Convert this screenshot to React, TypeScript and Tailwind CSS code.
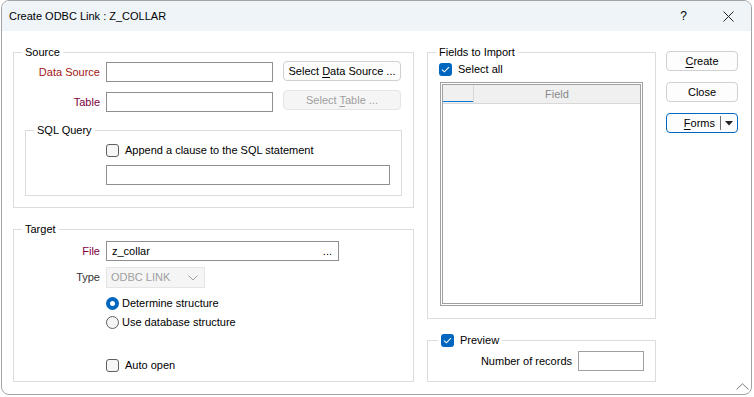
import React from "react";

const Check = ({ checked }: { checked?: boolean }) =>
  checked ? (
    <span className="w-[13px] h-[13px] rounded-[3px] bg-[#0067c0] flex items-center justify-center shrink-0">
      <svg width="9" height="7" viewBox="0 0 9 7">
        <path d="M1 3.6 L3.4 5.8 L8 1.2" stroke="white" strokeWidth="1.1" fill="none" />
      </svg>
    </span>
  ) : (
    <span className="w-[13px] h-[13px] rounded-[3px] border border-[#5f5f5f] bg-[#f7f7f7] shrink-0" />
  );

const Radio = ({ checked }: { checked?: boolean }) =>
  checked ? (
    <span className="w-[13px] h-[13px] rounded-full bg-[#0067c0] flex items-center justify-center shrink-0">
      <span className="w-[5px] h-[5px] rounded-full bg-white" />
    </span>
  ) : (
    <span className="w-[13px] h-[13px] rounded-full border border-[#5f5f5f] bg-[#f5f5f5] shrink-0" />
  );

const Btn = ({ children, disabled, className = "" }: { children: React.ReactNode; disabled?: boolean; className?: string }) => (
  <div
    className={
      "h-[20px] rounded-[4px] border flex items-center justify-center " +
      (disabled ? "bg-[#f5f5f5] border-[#e5e5e5] text-[#a0a0a0] " : "bg-[#fdfdfd] border-[#d0d0d0] text-black ") +
      className
    }
  >
    <span>{children}</span>
  </div>
);

export default function App() {
  return (
    <div className="w-[754px] h-[397px] bg-white font-['Liberation_Sans',Arial,sans-serif] text-[11px] text-black overflow-hidden">
      <div className="relative ml-px w-[751px] h-[395px] bg-white border border-[#a3a3a3] rounded-[8px] overflow-hidden flex flex-col">
        {/* title bar */}
        <div className="h-[30px] bg-[#eff4f9] flex items-center shrink-0">
          <span className="pl-[7px]">Create ODBC Link : Z_COLLAR</span>
          <div className="ml-auto flex h-full">
            <div className="w-[46px] flex items-center justify-center text-[12px] pl-[3px]">?</div>
            <div className="w-[46px] flex items-center justify-center">
              <svg width="11" height="11" viewBox="0 0 11 11">
                <path d="M0.5 0.5 L10.5 10.5 M10.5 0.5 L0.5 10.5" stroke="#222" strokeWidth="1" />
              </svg>
            </div>
          </div>
        </div>

        {/* body */}
        <div className="flex pl-[11px] pt-[13px]">
          {/* left column */}
          <div className="w-[401px] flex flex-col">
            <fieldset className="border border-[#dcdcdc] h-[164px] m-0 p-0">
              <legend className="ml-[8px] px-[3px] leading-[16px]">Source</legend>
              <div className="flex mt-[1px] h-[21px]">
                <div className="w-[86px] mr-[6px] text-right text-[#a31515] leading-[20px] mt-px">Data Source</div>
                <div className="w-[167px] h-[20px] mt-px border border-[#8f8f8f] bg-white" />
                <Btn className="ml-[10px] w-[118px]">
                  Select <u className="underline-offset-[2px]">D</u>ata Source ...
                </Btn>
              </div>
              <div className="flex mt-[8px] h-[22px]">
                <div className="w-[86px] mr-[6px] text-right text-[#800040] leading-[20px] mt-[2px]">Table</div>
                <div className="w-[167px] h-[20px] mt-[2px] border border-[#8f8f8f] bg-white" />
                <Btn disabled className="ml-[10px] w-[118px]">
                  Select <u className="underline-offset-[2px]">T</u>able ...
                </Btn>
              </div>
              <fieldset className="ml-[11px] mt-[10px] w-[377px] h-[74px] border border-[#dcdcdc] p-0">
                <legend className="ml-[8px] px-[3px] leading-[16px]">SQL Query</legend>
                <div className="flex items-center pl-[80px] mt-[6px] h-[13px]">
                  <Check />
                  <span className="ml-[6px]">Append a clause to the SQL statement</span>
                </div>
                <div className="ml-[80px] mt-[8px] w-[284px] h-[20px] border border-[#8f8f8f] bg-white" />
              </fieldset>
            </fieldset>

            <fieldset className="mt-[13px] border border-[#dcdcdc] h-[161px] m-0 p-0">
              <legend className="ml-[8px] px-[3px] leading-[16px]">Target</legend>
              <div className="flex mt-[4px] h-[20px]">
                <div className="w-[86px] mr-[6px] text-right text-[#800040] leading-[20px]">File</div>
                <div className="w-[233px] h-[20px] border border-[#8f8f8f] bg-white flex items-center justify-between px-[5px]">
                  <span>z_collar</span>
                  <span className="mr-[1px]">...</span>
                </div>
              </div>
              <div className="flex mt-[6px] h-[21px]">
                <div className="w-[86px] mr-[6px] text-right text-[#333] leading-[21px]">Type</div>
                <div className="w-[99px] h-[21px] border border-[#e5e5e5] bg-[#f5f5f5] flex items-center justify-between pl-[4px] pr-[6px] text-[#a0a0a0]">
                  <span>ODBC LINK</span>
                  <svg width="10" height="6" viewBox="0 0 10 6">
                    <path d="M0.5 0.5 L5 5 L9.5 0.5" stroke="#a0a0a0" strokeWidth="1" fill="none" />
                  </svg>
                </div>
              </div>
              <div className="flex items-center ml-[92px] mt-[8px] h-[14px]">
                <Radio checked />
                <span className="ml-[3px]">Determine structure</span>
              </div>
              <div className="flex items-center ml-[92px] mt-[5px] h-[14px]">
                <Radio />
                <span className="ml-[3px]">Use database structure</span>
              </div>
              <div className="flex items-center ml-[92px] mt-[30px] h-[13px]">
                <Check />
                <span className="ml-[6px]">Auto open</span>
              </div>
            </fieldset>
          </div>

          {/* middle column */}
          <div className="ml-[13px] w-[229px] flex flex-col">
            <fieldset className="border border-[#dcdcdc] h-[275px] m-0 p-0">
              <legend className="ml-[8px] px-[3px] leading-[16px]">Fields to Import</legend>
              <div className="flex items-center ml-[11px] mt-[3px] h-[13px]">
                <Check checked />
                <span className="ml-[6px]">Select all</span>
              </div>
              <div className="ml-[12px] mt-[6px] w-[203px] h-[224px] border-[3px] border-double border-[#a0a0a0] bg-white">
                <div className="flex h-[19px] bg-[#f0f0f0] border-b border-[#d8d8d8]">
                  <div className="w-[31px] border-r border-[#d8d8d8] relative">
                    <div className="absolute left-0 right-0 bottom-[1px] h-[1px] bg-[#0078d4]" />
                  </div>
                  <div className="flex-1 flex items-center justify-center text-[#8a8a8a]">Field</div>
                </div>
              </div>
            </fieldset>
            <fieldset className="mt-[13px] border border-[#dcdcdc] h-[50px] m-0 p-0">
              <legend className="ml-[10px] px-[3px] leading-[16px] flex items-center">
                <Check checked />
                <span className="ml-[6px]">Preview</span>
              </legend>
              <div className="flex items-center justify-end mt-[3px] pr-[11px]">
                <span className="mr-[6px]">Number of records</span>
                <div className="w-[66px] h-[20px] border border-[#a0a0a0] bg-white" />
              </div>
            </fieldset>
          </div>

          {/* right column */}
          <div className="ml-[10px] w-[72px] flex flex-col pt-[7px]">
            <Btn>
              <u className="underline-offset-[2px]">C</u>reate
            </Btn>
            <Btn className="mt-[11px]">Close</Btn>
            <div className="mt-[11px] h-[20px] rounded-[4px] border border-[#0067c0] bg-[#fdfdfd] flex items-center">
              <span className="flex-1 text-right pr-[5px]">
                <u className="underline-offset-[2px]">F</u>orms
              </span>
              <span className="w-px h-[14px] bg-[#707070]" />
              <span className="w-[16px] flex items-center justify-center">
                <svg width="8" height="5" viewBox="0 0 8 5">
                  <path d="M0 0 L8 0 L4 4.5 Z" fill="#222" />
                </svg>
              </span>
            </div>
          </div>
        </div>

        {/* resize grip */}
        <svg className="absolute right-[2px] bottom-[4px]" width="13" height="7" viewBox="0 0 13 7">
          <path d="M0.5 6.5 L6.5 0.8 L12.5 6.5" stroke="#7a7a7a" strokeWidth="1" fill="none" />
        </svg>
      </div>
    </div>
  );
}
